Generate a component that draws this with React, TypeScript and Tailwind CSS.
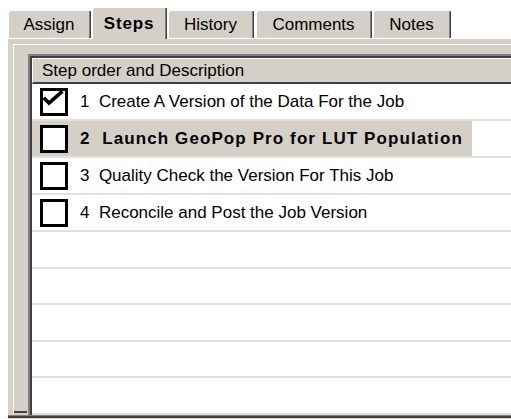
import React from "react";

type Tab = { label: string; width: string; selected?: boolean };

const tabs: Tab[] = [
  { label: "Assign", width: "w-[83px]" },
  { label: "Steps", width: "w-[75px]", selected: true },
  { label: "History", width: "w-[86px]" },
  { label: "Comments", width: "w-[116px]" },
  { label: "Notes", width: "w-[78px]" },
];

const steps = [
  { n: 1, text: "Create A Version of the Data For the Job", done: true },
  { n: 2, text: "Launch GeoPop Pro for LUT Population", current: true },
  { n: 3, text: "Quality Check the Version For This Job" },
  { n: 4, text: "Reconcile and Post the Job Version" },
];

function CheckBox({ checked }: { checked?: boolean }) {
  return (
    <div className="w-[28px] h-[28px] shrink-0 border-[3px] border-black bg-white">
      {checked && (
        <svg width="22" height="22" viewBox="0 0 22 22">
          <polyline
            points="2,8 6,12 18,1.5"
            fill="none"
            stroke="black"
            strokeWidth="3.6"
            strokeLinejoin="miter"
            strokeLinecap="square"
          />
        </svg>
      )}
    </div>
  );
}

export default function App() {
  const emptyRows = [0, 1, 2, 3, 4];
  return (
    <div className="w-[511px] h-[419px] bg-white overflow-hidden flex flex-col font-['Liberation_Sans',Arial,sans-serif] text-black text-[17px]">
      {/* tab strip */}
      <div className="h-[38px] shrink-0 flex items-end pl-[8px]">
        {tabs.map((t, i) => (
          <div
            key={t.label}
            className={
              t.selected
                ? `${t.width} h-[32px] -mb-px relative z-10 bg-[#d4d0c8] border-t border-l border-white rounded-tl-[3px] flex items-center justify-center font-bold tracking-[0.8px] ml-px`
                : `${t.width} h-[28px] bg-[#d4d0c8] border-t border-l border-white rounded-tl-[3px] flex items-center justify-center ${i === 3 ? "ml-[2px]" : i === 0 ? "" : "ml-px"}`
            }
          >
            <div className="flex-1 h-full flex items-center justify-center pt-[1px]">{t.label}</div>
            <div className="w-px h-full bg-[#808080]" />
            <div className="w-px h-full bg-[#404040] rounded-tr-[2px]" />
          </div>
        ))}
      </div>

      <div className="flex-1 ml-[7px] flex flex-col bg-[#d4d0c8]">
        {/* tab page */}
        <div className="flex-1 flex flex-col border-t border-l border-white">
          <div className="flex-1 flex flex-col pt-[5px] pl-[5px]">
            <div className="flex-1 flex border-t border-l border-white min-h-0">
              {/* left gutter */}
              <div className="w-[14px] shrink-0 flex flex-col justify-end pb-[2px]">
                <div className="h-[2px] bg-[#404040] mr-[1px]" />
              </div>
              {/* list view */}
              <div className="flex-1 mt-[9px] border-t-2 border-l-2 border-[#808080] min-w-0">
                <div className="h-full border-t-2 border-l-2 border-[#404040] bg-white flex flex-col overflow-hidden">
                  <div className="h-[26px] shrink-0 bg-[#d4d0c8] border-t border-l border-white border-b-2 border-b-[#404040] flex items-center pl-[9px] whitespace-nowrap">
                    Step order and Description
                  </div>
                  {steps.map((s) => (
                    <div
                      key={s.n}
                      className="h-[37px] shrink-0 border-b-2 border-[#e3e0da] flex"
                    >
                      <div
                        className={`${s.current ? "bg-[#d4d0c8] font-bold tracking-[1.1px]" : ""} w-[440px] h-full flex items-center pl-[8px] gap-[12px] whitespace-pre`}
                      >
                        <CheckBox checked={s.done} />
                        <span>{`${s.n}  ${s.text}`}</span>
                      </div>
                    </div>
                  ))}
                  {emptyRows.map((r) => (
                    <div key={r} className="h-[36.6px] shrink-0 border-b-2 border-[#e3e0da]" />
                  ))}
                </div>
              </div>
            </div>
          </div>
          <div className="h-px shrink-0 bg-[#808080]" />
          <div className="h-[2px] shrink-0 bg-[#404040]" />
        </div>
        <div className="h-[5px] shrink-0" />
      </div>
    </div>
  );
}
